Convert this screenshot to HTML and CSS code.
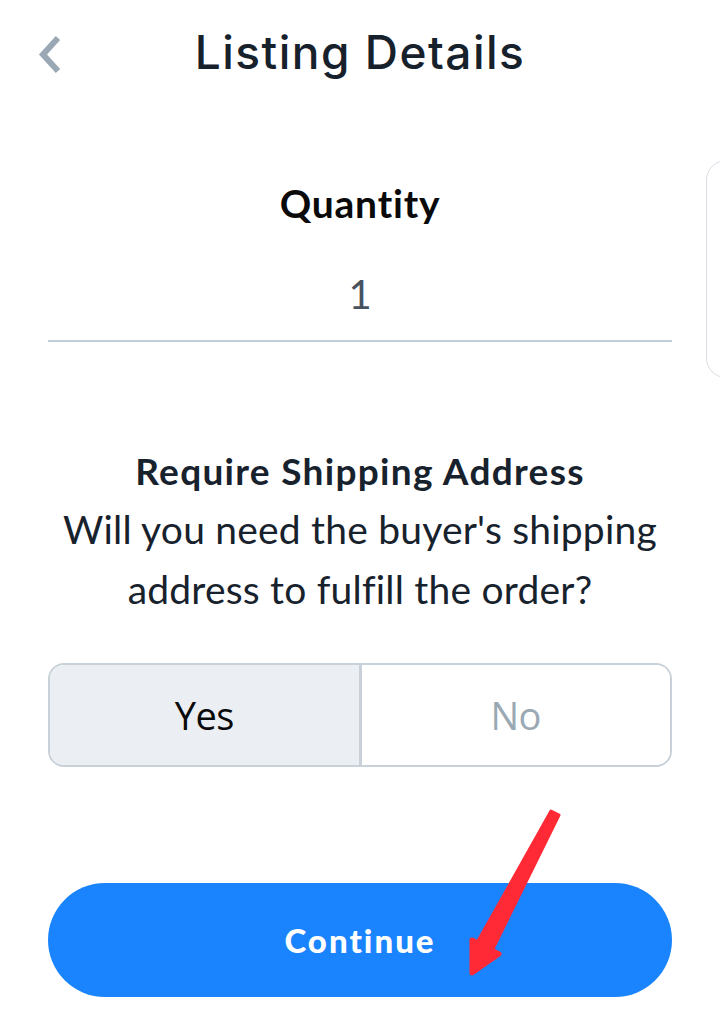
FILE: index.html
```html
<!DOCTYPE html>
<html lang="en">
<head>
    <meta charset="UTF-8">
    <meta name="viewport" content="width=device-width, initial-scale=1.0">
    <title>Listing Details</title>
    <link rel="stylesheet" href="styles.css">
</head>
<body>
    <header class="top-bar">
        <button class="back-button" title="Back">
            <svg width="26" height="40" viewBox="0 0 26 40">
                <path d="M22 3 L7 19.5 L22 36" fill="none" stroke="#9aa8b6" stroke-width="6"/>
            </svg>
        </button>
        <h1 class="page-title">Listing Details</h1>
    </header>

    <div class="side-card"></div>

    <main class="content">
        <section class="quantity">
            <h2 class="field-label">Quantity</h2>
            <div class="quantity-value">1</div>
        </section>

        <section class="shipping">
            <h2 class="shipping-title">Require Shipping Address</h2>
            <p class="shipping-text">Will you need the buyer's shipping<br>address to fulfill the order?</p>
        </section>

        <div class="toggle">
            <button class="toggle-option active">Yes</button>
            <button class="toggle-option">No</button>
        </div>

        <button class="continue-button">Continue</button>
    </main>

    <!-- annotation arrow -->
    <svg class="arrow" width="720" height="1020" viewBox="0 0 720 1020">
        <path d="M551 811 L559 815 L490 955 L474 948 Z" fill="#ff2a35" stroke="#ff2a35" stroke-width="3" stroke-linejoin="round"/>
        <path d="M472 940 L472 973 L499 954 Z" fill="#ff2a35" stroke="#ff2a35" stroke-width="5" stroke-linejoin="round"/>
    </svg>
</body>
</html>
```

FILE: styles.css
```css
/* Common styles */
body {
    font-family: Lato, "Open Sans", sans-serif;
    background-color: #fff;
    color: #14202b;
    margin: 0;
    padding: 0;
    width: 720px;
    height: 1020px;
    overflow: hidden;
    position: relative;
}

/* Header */
.top-bar {
    display: flex;
    justify-content: center;
    align-items: flex-start;
    height: 112px;
    padding-top: 22px;
    box-sizing: border-box;
    position: relative;
}

.back-button {
    position: absolute;
    left: 36px;
    top: 35px;
    background: none;
    border: none;
    padding: 0;
    cursor: pointer;
}

.page-title {
    margin: 0;
    font-family: Inter, sans-serif;
    font-weight: 500;
    font-size: 46px;
    line-height: 60px;
    letter-spacing: 1.5px;
    color: #17212c;
}

/* Partly visible card on the right edge */
.side-card {
    position: absolute;
    left: 706px;
    top: 160px;
    width: 40px;
    height: 216px;
    border: 1.5px solid #d8dee4;
    border-radius: 20px;
}

/* Content */
.content {
    padding: 0 48px;
    display: flex;
    flex-direction: column;
    align-items: stretch;
}

.quantity {
    text-align: center;
    border-bottom: 2px solid #c2ccd5;
    padding-top: 68px;
    padding-bottom: 26px;
}

.field-label {
    margin: 0;
    font-size: 39px;
    font-weight: 700;
    line-height: 46px;
    letter-spacing: 0.8px;
    color: #0a0a0a;
}

.quantity-value {
    margin-top: 48px;
    font-size: 40px;
    line-height: 40px;
    color: #47525e;
}

.shipping {
    text-align: center;
    margin-top: 107px;
}

.shipping-title {
    margin: 0;
    font-size: 37px;
    font-weight: 700;
    line-height: 44px;
    letter-spacing: 1.3px;
    color: #17222d;
}

.shipping-text {
    margin: 6px 0 0;
    font-size: 39px;
    line-height: 60px;
    letter-spacing: 0.2px;
    color: #17222d;
}

/* Yes / No toggle */
.toggle {
    display: flex;
    margin-top: 44px;
    height: 104px;
    border: 2px solid #c8d1d9;
    border-radius: 16px;
    overflow: hidden;
    box-sizing: border-box;
}

.toggle-option {
    flex: 1;
    border: none;
    background: #fff;
    font-family: "Open Sans", sans-serif;
    font-size: 38px;
    letter-spacing: -0.5px;
    color: #9aa9b4;
    cursor: pointer;
    padding: 0;
}

.toggle-option.active {
    background: #ebeff3;
    color: #0a0a0a;
    border-right: 3px solid #c8d1d9;
}

/* Continue button */
.continue-button {
    margin-top: 116px;
    height: 114px;
    border: none;
    border-radius: 57px;
    background-color: #1a84ff;
    color: #fff;
    font-family: Lato, sans-serif;
    font-weight: 900;
    font-size: 33px;
    letter-spacing: 2px;
    cursor: pointer;
}

/* Annotation arrow */
.arrow {
    position: absolute;
    left: 0;
    top: 0;
    pointer-events: none;
}
```
